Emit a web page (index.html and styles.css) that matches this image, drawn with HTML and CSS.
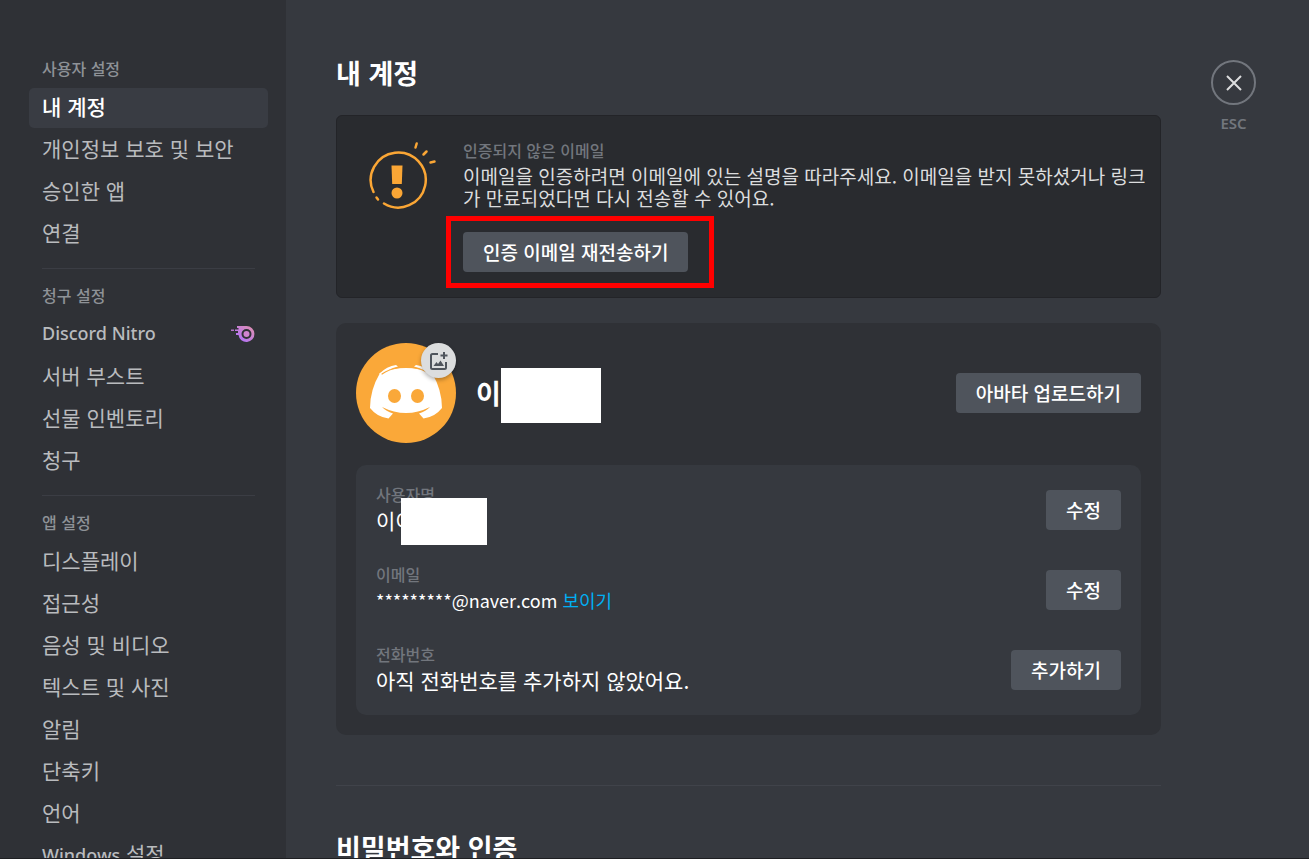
FILE: index.html
```html
<!DOCTYPE html>
<html lang="ko">
<head>
    <meta charset="UTF-8">
    <meta name="viewport" content="width=device-width, initial-scale=1.0">
    <title>내 계정</title>
    <link rel="stylesheet" href="styles.css">
</head>
<body>
    <div class="settings">
        <nav class="sidebar">
            <h2 class="nav-title">사용자 설정</h2>
            <a href="#" class="nav-item active">내 계정</a>
            <a href="#" class="nav-item">개인정보 보호 및 보안</a>
            <a href="#" class="nav-item">승인한 앱</a>
            <a href="#" class="nav-item">연결</a>
            <hr class="nav-line">

            <h2 class="nav-title">청구 설정</h2>
            <a href="#" class="nav-item">
                <span class="latin">Discord Nitro</span>
                <svg class="nitro-icon" width="24" height="20" viewBox="0 -2 24 20">
                    <defs>
                        <linearGradient id="nitro" x1="0" y1="1" x2="1" y2="0">
                            <stop offset="0.2" stop-color="#b473f5"/>
                            <stop offset="1" stop-color="#e292aa"/>
                        </linearGradient>
                    </defs>
                    <path fill="url(#nitro)" fill-rule="evenodd" d="M6 1H15.500A8 8 0 1 1 7.500 10H5V8H7V6H4V4.500H7.500V3H6ZM15.500 4A5 5 0 1 0 15.500 14A5 5 0 1 0 15.500 4Z"/>
                    <circle cx="15.500" cy="9" r="3" fill="#d184d0"/>
                    <path fill="#b473c8" d="M0 4.500h3v1.500H0z"/>
                </svg>
            </a>
            <a href="#" class="nav-item">서버 부스트</a>
            <a href="#" class="nav-item">선물 인벤토리</a>
            <a href="#" class="nav-item">청구</a>
            <hr class="nav-line">

            <h2 class="nav-title">앱 설정</h2>
            <a href="#" class="nav-item">디스플레이</a>
            <a href="#" class="nav-item">접근성</a>
            <a href="#" class="nav-item">음성 및 비디오</a>
            <a href="#" class="nav-item">텍스트 및 사진</a>
            <a href="#" class="nav-item">알림</a>
            <a href="#" class="nav-item">단축키</a>
            <a href="#" class="nav-item">언어</a>
            <a href="#" class="nav-item"><span><span class="latin">Windows</span> 설정</span></a>
        </nav>

        <main class="content">
            <h1 class="page-title">내 계정</h1>

            <!-- Unverified email notice -->
            <section class="notice">
                <svg class="notice-icon" width="70" height="70" viewBox="1 -3 70 70" fill="none" stroke="#faa635" stroke-width="2.500" stroke-linecap="round">
                    <path d="M5.500 49A27.500 27.500 0 1 1 16 60.500"/>
                    <path d="M8.500 54.500l1.500 2M47.500 4.500l1.200-4M55.500 11.500l3-3M62.500 19.500l4-1"/>
                    <path fill="#faa635" stroke="none" d="M23.500 22.500h11L33.800 41h-9.600z"/>
                    <circle cx="29" cy="50" r="5.500" fill="#faa635" stroke="none"/>
                </svg>
                <div class="notice-body">
                    <h3 class="label">인증되지 않은 이메일</h3>
                    <p class="notice-text">이메일을 인증하려면 이메일에 있는 설명을 따라주세요. 이메일을 받지 못하셨거나 링크가 만료되었다면 다시 전송할 수 있어요.</p>
                    <div class="resend">
                        <button type="button" class="button">인증 이메일 재전송하기</button>
                        <div class="highlight"></div>
                    </div>
                </div>
            </section>

            <!-- Profile card -->
            <section class="profile">
                <div class="profile-head">
                    <div class="avatar">
                        <svg width="100" height="100" viewBox="0 0 100 100">
                            <circle cx="50" cy="50" r="50" fill="#faa839"/>
                            <path fill="#fff" d="M24 30Q34 25 50 25Q66 25 76 30Q86 47 86 65Q79 74 67.500 75.500L63 70.500Q70 68 74 64Q62 70 50 70Q38 70 26 64Q30 68 37 70.500L32.500 75.500Q21 74 14 65Q14 47 24 30Z"/>
                            <path fill="#fff" d="M23 31Q31 23 40 22L42 23.500Q33 25.500 26 31ZM77 31Q69 23 60 22L58 23.500Q67 25.500 74 31Z"/>
                            <path fill="none" stroke="#faa839" stroke-width="1.200" stroke-linecap="round" d="M26 31Q33 26 44 24.500M74 31Q67 26 56 24.500"/>
                            <ellipse cx="38.500" cy="53" rx="6.500" ry="7" fill="#faa839"/>
                            <ellipse cx="61.500" cy="53" rx="6.500" ry="7" fill="#faa839"/>
                        </svg>
                        <button type="button" class="avatar-edit" aria-label="아바타 변경">
                            <svg width="20" height="20" viewBox="0 0 20 20" fill="none" stroke="#4f545c" stroke-width="2">
                                <path d="M9 3H3.500Q2 3 2 4.500V16.500Q2 18 3.500 18H15.500Q17 18 17 16.500V11"/>
                                <path d="M15 1V8M11.500 4.500H18.500"/>
                                <path fill="#4f545c" stroke="none" d="M4.500 15L7.500 11L9 13L11.500 9.500L15 15Z"/>
                            </svg>
                        </button>
                    </div>
                    <div class="name">이<span class="cover cover-name"></span></div>
                    <button type="button" class="button">아바타 업로드하기</button>
                </div>

                <div class="fields">
                    <div class="field">
                        <div class="field-text">
                            <h3 class="label">사용자명</h3>
                            <div class="value">이이<span class="cover cover-user"></span></div>
                        </div>
                        <button type="button" class="button">수정</button>
                    </div>
                    <div class="field">
                        <div class="field-text">
                            <h3 class="label">이메일</h3>
                            <div class="value email">*********@naver.com <a href="#" class="link">보이기</a></div>
                        </div>
                        <button type="button" class="button">수정</button>
                    </div>
                    <div class="field">
                        <div class="field-text">
                            <h3 class="label">전화번호</h3>
                            <div class="value">아직 전화번호를 추가하지 않았어요.</div>
                        </div>
                        <button type="button" class="button">추가하기</button>
                    </div>
                </div>
            </section>

            <hr class="section-line">
            <h2 class="page-title">비밀번호와 인증</h2>
        </main>

        <div class="close">
            <button type="button" class="close-button" aria-label="닫기">
                <svg width="16" height="16" viewBox="0 0 16 16" stroke="#dcddde" stroke-width="2">
                    <path d="M1 1L15 15M15 1L1 15"/>
                </svg>
            </button>
            <div class="close-text">ESC</div>
        </div>
    </div>
</body>
</html>
```

FILE: styles.css
```css
* {
    box-sizing: border-box;
}

body {
    margin: 0;
    font-family: "Noto Sans CJK KR", "Noto Sans", sans-serif;
    background-color: #36393f;
    color: #dcddde;
}

h1, h2, h3, p {
    margin: 0;
}

a {
    text-decoration: none;
}

button {
    font-family: inherit;
    border: none;
    padding: 0;
    cursor: pointer;
}

.settings {
    display: flex;
    height: 100vh;
    overflow: hidden;
    border-bottom: 1px solid #1e1f22;
}

/* Sidebar */
.sidebar {
    flex: 0 0 286px;
    padding: 58px 18px 0 29px;
    background-color: #2f3136;
}

.nav-title {
    padding: 0 13px;
    margin-bottom: 10px;
    font-size: 16px;
    line-height: 20px;
    font-weight: 500;
    color: #8e9297;
}

.nav-item {
    display: flex;
    align-items: center;
    justify-content: space-between;
    height: 40px;
    margin-bottom: 2px;
    padding: 0 13px 4px;
    border-radius: 5px;
    font-size: 21px;
    line-height: 26px;
    color: #b9bbbe;
}

.nav-item.active {
    background-color: #393c43;
    color: #fff;
    font-weight: 500;
}

.latin {
    font-family: "Noto Sans", sans-serif;
    font-size: 18px;
    font-weight: 500;
}

.nav-line {
    height: 1px;
    margin: 14px 13px 16px;
    border: none;
    background-color: #3b3d44;
}

/* Main column */
.content {
    flex: 1;
    max-width: 925px;
    padding: 58px 0 0 50px;
}

.page-title {
    font-size: 27px;
    line-height: 30px;
    font-weight: 700;
    color: #fff;
}

.label {
    font-size: 16px;
    line-height: 20px;
    font-weight: 500;
    color: #72767d;
}

.button {
    height: 40px;
    padding: 0 20px;
    border-radius: 4px;
    background-color: #4f545c;
    color: #fff;
    font-size: 19px;
    line-height: 24px;
    font-weight: 500;
}

.notice {
    display: flex;
    gap: 24px;
    margin-top: 27px;
    padding: 24px 10px 25px 32px;
    border: 1px solid #232428;
    border-radius: 6px;
    background-color: #292b2f;
}

.notice-icon {
    flex: none;
}

.notice-text {
    margin: 5px 0 23px;
    font-size: 19px;
    line-height: 22px;
    word-break: break-all;
}

.resend {
    position: relative;
    display: inline-block;
    vertical-align: top;
}

.highlight {
    position: absolute;
    top: -16px;
    right: -26px;
    bottom: -16px;
    left: -17px;
    border: 5px solid #f00;
}

.profile {
    margin-top: 25px;
    padding: 20px;
    border-radius: 10px;
    background-color: #2f3136;
}

.profile-head {
    display: flex;
    align-items: center;
    margin-bottom: 22px;
}

.avatar {
    position: relative;
    height: 100px;
    margin-right: 20px;
}

.avatar-edit {
    position: absolute;
    top: 0;
    right: 0;
    display: flex;
    align-items: center;
    justify-content: center;
    width: 35px;
    height: 35px;
    border-radius: 50%;
    background-color: #dcddde;
    box-shadow: 0 2px 4px rgba(0, 0, 0, 0.3);
}

.name {
    position: relative;
    flex: 1;
    font-size: 27px;
    line-height: 30px;
    font-weight: 700;
    color: #fff;
}

/* White boxes that hide the user's name */
.cover {
    position: absolute;
    background-color: #fff;
}

.cover-name {
    top: -10px;
    left: 25px;
    width: 100px;
    height: 55px;
}

.cover-user {
    top: -9px;
    left: 25px;
    width: 86px;
    height: 47px;
}

.fields {
    display: flex;
    flex-direction: column;
    gap: 30px;
    padding: 20px;
    border-radius: 10px;
    background-color: #36393f;
}

.field {
    display: flex;
    align-items: center;
    justify-content: space-between;
    height: 50px;
}

.field-text {
    padding-bottom: 3px;
}

.value {
    position: relative;
    margin-top: 3px;
    font-size: 21px;
    line-height: 26px;
    color: #fff;
}

.email {
    font-size: 18px;
}

.link {
    color: #00aff4;
}

.section-line {
    height: 1px;
    margin: 50px 0 47px;
    border: none;
    background-color: #40434a;
}

/* Close button */
.close {
    flex: none;
    width: 148px;
    padding: 60px 53px 0 50px;
    text-align: center;
}

.close-button {
    display: flex;
    align-items: center;
    justify-content: center;
    width: 45px;
    height: 45px;
    border: 2px solid #72767d;
    border-radius: 50%;
    background: none;
}

.close-text {
    margin-top: 8px;
    font-family: "Noto Sans", sans-serif;
    font-size: 15px;
    line-height: 20px;
    font-weight: 600;
    color: #72767d;
}
```
